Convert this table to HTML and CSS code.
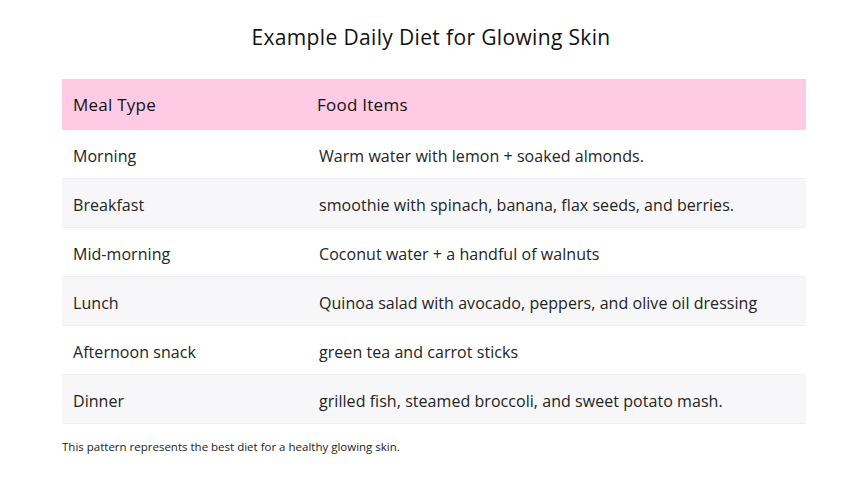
FILE: index.html
```html
<!DOCTYPE html>
<html lang="en">
<head>
<meta charset="utf-8">
<title>Example Daily Diet for Glowing Skin</title>
<link rel="stylesheet" href="styles.css">
</head>
<body>
<main class="page">
  <h1 class="title">Example Daily Diet for Glowing Skin</h1>
  <table class="diet">
    <thead>
      <tr><th class="c1">Meal Type</th><th class="c2">Food Items</th></tr>
    </thead>
    <tbody>
      <tr><td class="c1">Morning</td><td class="c2">Warm water with lemon + soaked almonds.</td></tr>
      <tr class="alt"><td class="c1">Breakfast</td><td class="c2">smoothie with spinach, banana, flax seeds, and berries.</td></tr>
      <tr><td class="c1">Mid-morning</td><td class="c2">Coconut water + a handful of walnuts</td></tr>
      <tr class="alt"><td class="c1">Lunch</td><td class="c2">Quinoa salad with avocado, peppers, and olive oil dressing</td></tr>
      <tr><td class="c1">Afternoon snack</td><td class="c2">green tea and carrot sticks</td></tr>
      <tr class="alt"><td class="c1">Dinner</td><td class="c2">grilled fish, steamed broccoli, and sweet potato mash.</td></tr>
    </tbody>
  </table>
  <p class="note">This pattern represents the best diet for a healthy glowing skin.</p>
</main>
</body>
</html>
```

FILE: styles.css
```css
html, body {
  margin: 0;
  padding: 0;
  background: #ffffff;
}
body {
  font-family: "Open Sans", "Liberation Sans", sans-serif;
  color: #1f1f1f;
}
.page {
  padding: 22px 55px 0 62px;
}
.title {
  margin: 0 0 27px;
  padding-right: 6px;
  text-align: center;
  font-size: 21px;
  font-weight: 500;
  line-height: 30px;
  letter-spacing: 0.35px;
  color: #111;
}
.diet {
  width: 744px;
  border-collapse: collapse;
}
.diet th {
  background: #ffcbe4;
  height: 51px;
  padding: 0;
  text-align: left;
  font-size: 17px;
  font-weight: 500;
  letter-spacing: 0.25px;
  color: #121212;
}
.diet td {
  height: 44px;
  padding: 4px 0 0;
  font-size: 16px;
  letter-spacing: 0.05px;
  color: #242424;
  border-bottom: 1px solid #efeff1;
}
.diet tr.alt td {
  background: #f7f6f8;
}
.diet .c1 {
  width: 244px;
  padding-left: 11px;
}
.diet th.c2 { padding-left: 0; }
.diet td.c2 { padding-left: 2px; }
.note {
  margin: 15px 0 0;
  font-size: 11.5px;
  color: #222;
}
```
